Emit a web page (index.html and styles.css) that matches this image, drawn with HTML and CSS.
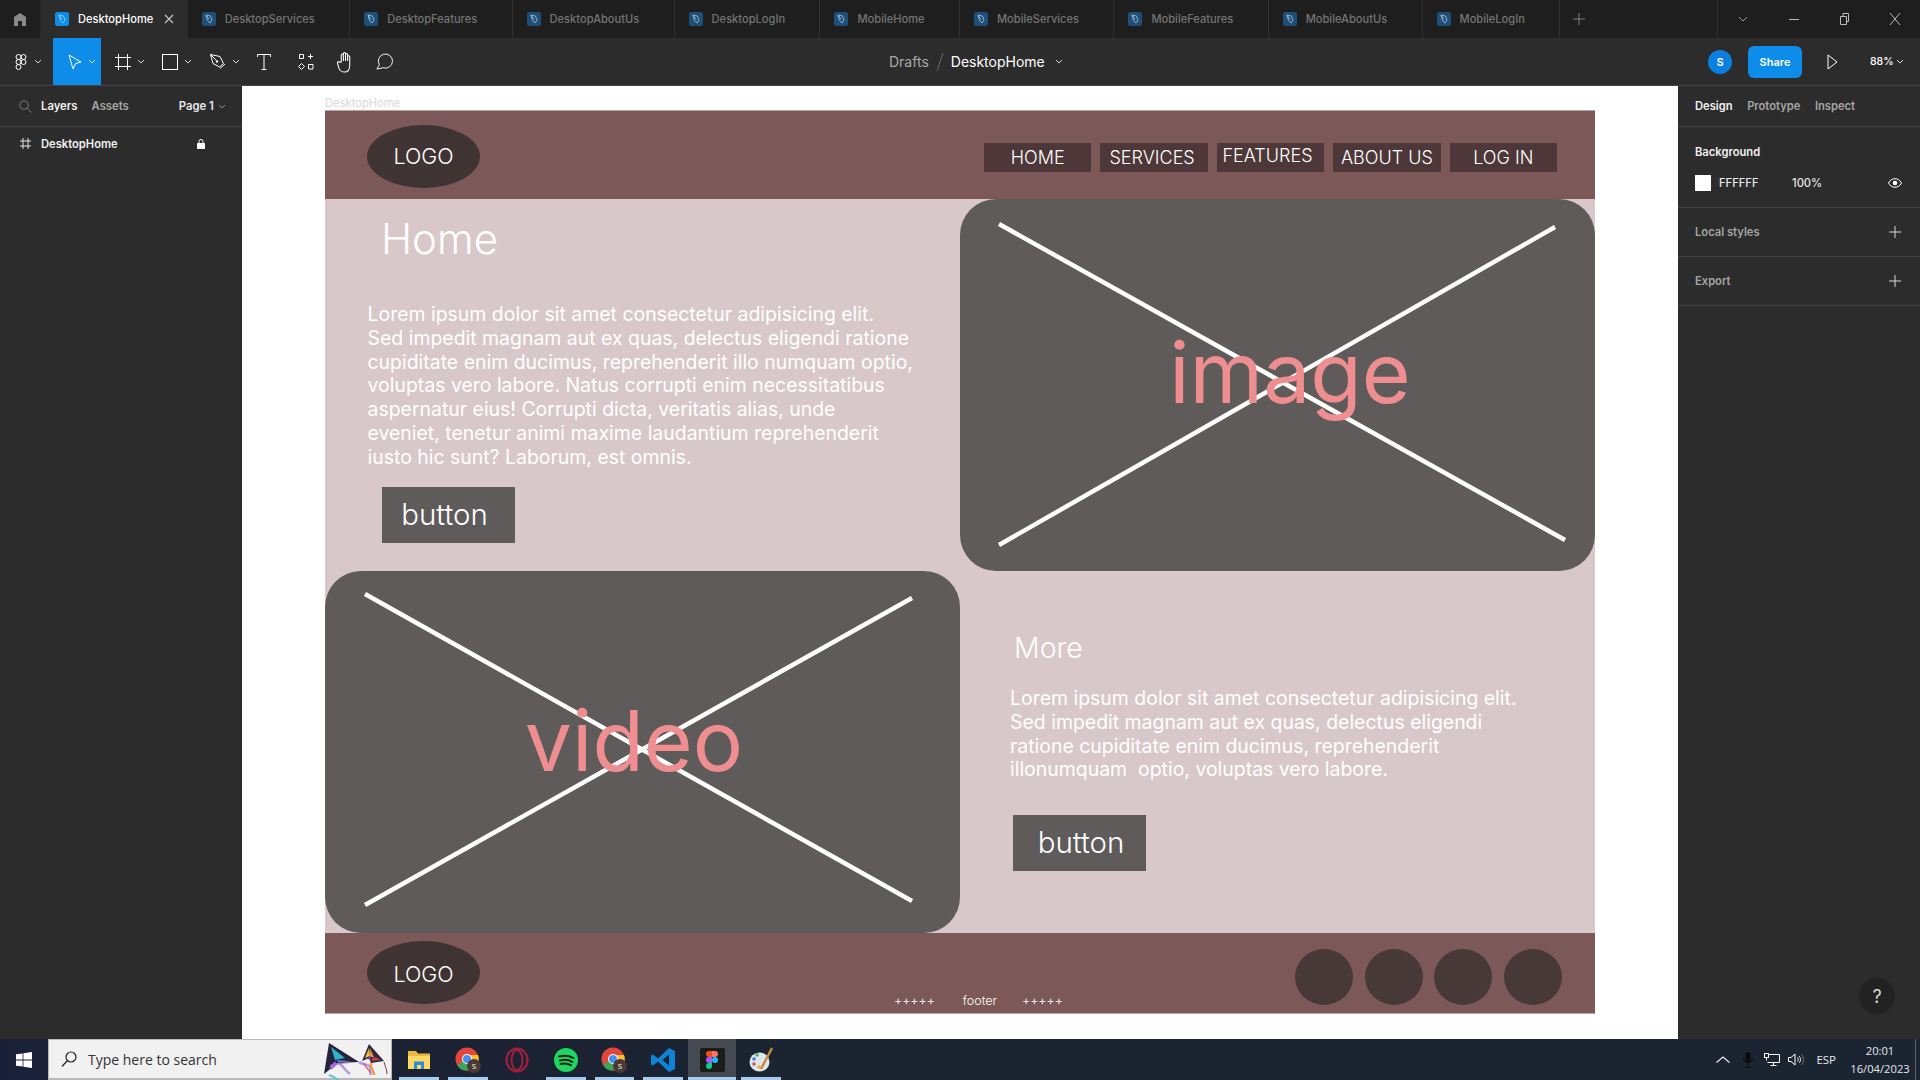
FILE: index.html
```html
<!DOCTYPE html>
<html lang="en">
<head>
<meta charset="utf-8">
<title>DesktopHome - Figma</title>
<link rel="stylesheet" href="styles.css">
</head>
<body>
<svg class="defs" width="0" height="0" aria-hidden="true">
  <symbol id="fileicon" viewBox="0 0 14 14">
    <rect width="14" height="14" rx="2" fill="currentColor"/>
    <path d="M4 3l4.500 1 1.500 4-2 3-2.500-2.500zM4.500 3.500L7 7.500" fill="none" stroke="#cfe6f8" stroke-width=".8" opacity=".8"/>
  </symbol>
  <symbol id="chev" viewBox="0 0 8 5">
    <path d="M1 1l3 3 3-3" fill="none" stroke="currentColor" stroke-width="1"/>
  </symbol>
  <symbol id="plus" viewBox="0 0 12 12">
    <path d="M6 0v12M0 6h12" fill="none" stroke="currentColor" stroke-width="1"/>
  </symbol>
</svg>
<div class="app">
  <div class="tabs">
    <div class="tab-home">
      <svg class="ico-home" viewBox="0 0 14 13"><path d="M7 0l6 4v9H9V8H5v5H1V4z" fill="#8a8a8a"/></svg>
    </div>
    <div class="tab active"><svg class="fileicon"><use href="#fileicon"/></svg><span>DesktopHome</span>
      <svg class="tab-close" viewBox="0 0 10 10"><path d="M1 1l8 8M9 1l-8 8" stroke="#c8c8c8" stroke-width="1.200"/></svg>
    </div>
    <div class="tab"><svg class="fileicon"><use href="#fileicon"/></svg><span>DesktopServices</span></div>
    <div class="tab"><svg class="fileicon"><use href="#fileicon"/></svg><span>DesktopFeatures</span></div>
    <div class="tab"><svg class="fileicon"><use href="#fileicon"/></svg><span>DesktopAboutUs</span></div>
    <div class="tab"><svg class="fileicon"><use href="#fileicon"/></svg><span>DesktopLogIn</span></div>
    <div class="tab"><svg class="fileicon"><use href="#fileicon"/></svg><span>MobileHome</span></div>
    <div class="tab"><svg class="fileicon"><use href="#fileicon"/></svg><span>MobileServices</span></div>
    <div class="tab"><svg class="fileicon"><use href="#fileicon"/></svg><span>MobileFeatures</span></div>
    <div class="tab"><svg class="fileicon"><use href="#fileicon"/></svg><span>MobileAboutUs</span></div>
    <div class="tab"><svg class="fileicon"><use href="#fileicon"/></svg><span>MobileLogIn</span></div>
    <div class="tab-add"><svg class="ico-plus"><use href="#plus"/></svg></div>
    <div class="win-controls">
      <svg class="win-ico" viewBox="0 0 12 12"><path d="M2 4l4 4 4-4" fill="none" stroke="#9a9a9a"/></svg>
      <svg class="win-ico" viewBox="0 0 12 12"><path d="M1 6.500h10" stroke="#bdbdbd"/></svg>
      <svg class="win-ico" viewBox="0 0 12 12"><path d="M2.500 3.500h6v8h-6zM5 3.500v-3h5.500v8H8.500" fill="none" stroke="#bdbdbd"/></svg>
      <svg class="win-ico" viewBox="0 0 12 12"><path d="M1 0l10 12M11 0L1 12" stroke="#bdbdbd"/></svg>
    </div>
  </div>

  <div class="toolbar">
    <div class="tools">
      <div class="tool tool-menu">
        <svg class="ico-logo" viewBox="0 0 12 16"><g fill="none" stroke="#fff"><circle cx="3.500" cy="3" r="2.500"/><circle cx="8.500" cy="3" r="2.500"/><circle cx="3.500" cy="8" r="2.500"/><circle cx="8.500" cy="8" r="2.500"/><circle cx="3.500" cy="13" r="2.500"/></g></svg>
        <svg class="chev"><use href="#chev"/></svg>
      </div>
      <div class="tool tool-move">
        <svg class="ico-tool" viewBox="0 0 16 16"><path d="M2 1l12 7-5.500 1.500L6 15z" fill="none" stroke="#fff"/></svg>
        <svg class="chev"><use href="#chev"/></svg>
      </div>
      <div class="tool tool-frame">
        <svg class="ico-tool" viewBox="0 0 16 16"><path d="M3.500 0v16M12.500 0v16M0 3.500h16M0 12.500h16" fill="none" stroke="#fff"/></svg>
        <svg class="chev"><use href="#chev"/></svg>
      </div>
      <div class="tool tool-rect">
        <svg class="ico-tool" viewBox="0 0 16 16"><rect x=".5" y=".5" width="15" height="15" fill="none" stroke="#fff"/></svg>
        <svg class="chev"><use href="#chev"/></svg>
      </div>
      <div class="tool tool-pen">
        <svg class="ico-tool" viewBox="0 0 16 16"><path d="M.5.500l9.500 2 3.500 7-4 3.500-6.500-3.500zM.5.500l6 6M10 14.500l5-4.500" fill="none" stroke="#fff"/><circle cx="7" cy="7.500" r="1.200" fill="#fff"/></svg>
        <svg class="chev"><use href="#chev"/></svg>
      </div>
      <div class="tool tool-text">
        <svg class="ico-tool" viewBox="0 0 14 16"><path d="M.5 3V.5h13V3M7 .5v15M4.500 15.500h5" fill="none" stroke="#fff"/></svg>
      </div>
      <div class="tool tool-comp">
        <svg class="ico-tool" viewBox="0 0 16 16"><path d="M1.500.5h4v4h-4zM10 2.500h5M12.500 0v5M3.500 9.500l3 3-3 3-3-3zM10.500 10.500h4.500v4.500h-4.500z" fill="none" stroke="#fff"/></svg>
      </div>
      <div class="tool tool-hand">
        <svg class="ico-big ico-hand" viewBox="0 0 18 20"><path d="M5 10V3.500a1 1 0 012 0V9 2a1 1 0 012 0v7-6a1 1 0 012 0v6-4a1 1 0 012 0v8c0 4-1.500 6.500-5 6.500-3 0-4-1-5-3L1.500 11.500c-.8-1.300.8-2.400 1.800-1.400z" fill="none" stroke="#fff"/></svg>
      </div>
      <div class="tool tool-comment">
        <svg class="ico-big" viewBox="0 0 18 18"><path d="M3.500 11.800A7.500 7.500 0 117.500 15.100L1 16.500z" fill="none" stroke="#fff"/></svg>
      </div>
    </div>
    <div class="crumbs">
      <span class="crumb-parent">Drafts</span>
      <svg class="crumb-sep" viewBox="0 0 8 18"><path d="M7 0L1 18" stroke="#6a6a6a"/></svg>
      <span class="crumb-file">DesktopHome</span>
      <svg class="chev"><use href="#chev"/></svg>
    </div>
    <div class="actions">
      <div class="avatar">S</div>
      <div class="share">Share</div>
      <svg class="ico-play" viewBox="0 0 11 16"><path d="M1 1l9 7-9 7z" fill="none" stroke="#fff"/></svg>
      <span class="zoom-val">88%</span>
      <svg class="chev"><use href="#chev"/></svg>
    </div>
  </div>

  <div class="main">
    <aside class="left">
      <div class="left-tabs">
        <svg class="ico-search" viewBox="0 0 13 13"><circle cx="5" cy="5" r="4.300" fill="none" stroke="#7d7d7d"/><path d="M8 8l4.500 4.500" stroke="#7d7d7d"/></svg>
        <span class="lt-on">Layers</span>
        <span class="lt-off">Assets</span>
        <span class="lt-page">Page 1</span>
        <svg class="chev chev-dim"><use href="#chev"/></svg>
      </div>
      <div class="layer">
        <svg class="ico-hash" viewBox="0 0 11 11"><path d="M3 0v11M8 0v11M0 3h11M0 8h11" fill="none" stroke="#e8e8e8"/></svg>
        <span class="layer-name">DesktopHome</span>
        <svg class="ico-lock" viewBox="0 0 8 10"><rect y="4" width="8" height="6" rx=".5" fill="#fff"/><path d="M2 4.500V2.500a2 2 0 014 0v2" fill="none" stroke="#fff"/></svg>
      </div>
    </aside>

    <div class="canvas">
      <div class="frame-label">DesktopHome</div>
      <div class="frame">
        <header class="site-head">
          <div class="logo logo-head">LOGO</div>
          <nav class="nav">
            <a class="nav-item">HOME</a>
            <a class="nav-item nav-left">SERVICES</a>
            <a class="nav-item nav-raised">FEATURES</a>
            <a class="nav-item">ABOUT US</a>
            <a class="nav-item">LOG IN</a>
          </nav>
        </header>
        <section class="intro">
          <h1 class="intro-title">Home</h1>
          <p class="body-text">Lorem ipsum dolor sit amet consectetur adipisicing elit.<br>Sed impedit magnam aut ex quas, delectus eligendi ratione<br>cupiditate enim ducimus, reprehenderit illo numquam optio,<br>voluptas vero labore. Natus corrupti enim necessitatibus<br>aspernatur eius! Corrupti dicta, veritatis alias, unde<br>eveniet, tenetur animi maxime laudantium reprehenderit<br>iusto hic sunt? Laborum, est omnis.</p>
          <div class="btn btn-intro">button</div>
        </section>
        <figure class="media media-image">
          <span class="media-word">image</span>
          <svg class="media-x" viewBox="0 0 635 372"><path d="M39 25l566 316M595 28L39 346" stroke="#fff" stroke-width="4.500" fill="none"/></svg>
        </figure>
        <figure class="media media-video">
          <span class="media-word">video</span>
          <svg class="media-x" viewBox="0 0 635 362"><path d="M40 23l547 307M587 27L40 334" stroke="#fff" stroke-width="4.500" fill="none"/></svg>
        </figure>
        <section class="more">
          <h2 class="more-title">More</h2>
          <p class="body-text">Lorem ipsum dolor sit amet consectetur adipisicing elit.<br>Sed impedit magnam aut ex quas, delectus eligendi<br>ratione cupiditate enim ducimus, reprehenderit<br>illonumquam&nbsp; optio, voluptas vero labore.</p>
          <div class="btn btn-more">button</div>
        </section>
        <footer class="site-foot">
          <div class="logo logo-foot">LOGO</div>
          <div class="foot-text"><span>+++++</span><span>footer</span><span>+++++</span></div>
          <div class="socials"><i class="social"></i><i class="social"></i><i class="social"></i><i class="social"></i></div>
        </footer>
      </div>
    </div>

    <aside class="right">
      <div class="right-tabs"><span class="lt-on">Design</span><span class="lt-off">Prototype</span><span class="lt-off">Inspect</span></div>
      <div class="panel-bg">
        <div class="panel-title">Background</div>
        <div class="bg-row">
          <i class="swatch"></i><span class="bg-hex">FFFFFF</span><span class="bg-pct">100%</span>
          <svg class="ico-eye" viewBox="0 0 14 10"><path d="M.5 5C2 2 4.500.7 7 .7S12 2 13.500 5C12 8 9.500 9.300 7 9.300S2 8 .5 5z" fill="none" stroke="#fff"/><circle cx="7" cy="5" r="2.300" fill="#fff"/></svg>
        </div>
      </div>
      <div class="panel-row"><span class="lt-off">Local styles</span><svg class="ico-plus"><use href="#plus"/></svg></div>
      <div class="panel-row"><span class="lt-off">Export</span><svg class="ico-plus"><use href="#plus"/></svg></div>
      <div class="help">?</div>
    </aside>
  </div>

  <div class="taskbar">
    <div class="start">
      <svg class="ico-win" viewBox="0 0 16 16"><path d="M0 2.300l6.600-.9v6.200H0zM7.400 1.300L16 0v7.600H7.400zM0 8.400h6.600v6.200L0 13.700zM7.400 8.400H16V16l-8.600-1.300z" fill="#fff"/></svg>
    </div>
    <div class="searchbox">
      <svg class="ico-tsearch" viewBox="0 0 16 16"><circle cx="10" cy="6" r="5" fill="none" stroke="#222" stroke-width="1.200"/><path d="M6.500 9.500L1 15.500" stroke="#222" stroke-width="1.200"/></svg>
      <span class="search-text">Type here to search</span>
      <svg class="ico-kites" viewBox="0 0 65 41">
        <path d="M14 24c5 2 7 8 12 11M35 23c4 4 9 1 11 5 1 3-1 5 1 8" fill="none" stroke="#b79be0" stroke-width="2.500"/>
        <path d="M5 36c3 1 6 2 9 5" fill="none" stroke="#52c4d8" stroke-width="2"/>
        <path d="M5 4l30 19-21 1L0 35z" fill="#23233a"/>
        <path d="M7 8l14 11-10 2z" fill="#2fb3c9"/>
        <path d="M13 21l15 1.500-14 1z" fill="#6f7fd8"/>
        <path d="M4 30l7-8 1 2z" fill="#9d5fd6"/>
        <path d="M6 26l6-2 14 0-12 1-7 6z" fill="#a868e0"/>
        <path d="M47 24c-1 4 3 8 3 12" fill="none" stroke="#ee9a4a" stroke-width="2.500"/>
        <path d="M40 24c1 4 4 6 7 10" fill="none" stroke="#d8515a" stroke-width="1.200"/>
        <path d="M60 23c1 4 3 8 3 12" fill="none" stroke="#8c3a3a" stroke-width="1"/>
        <path d="M45 5l-7 17 7-3 2 5 13-2z" fill="#2a2a3c"/>
        <path d="M45 9l-4 10 5-2z" fill="#f2c23e"/>
        <path d="M46 9l4 9-4 0z" fill="#e98a3c"/>
        <path d="M48 19l3-1 6 3-9 1z" fill="#c8404a"/>
        <path d="M42 20l4-2 1 3z" fill="#8a4fc4"/>
      </svg>
    </div>
    <div class="apps">
      <div class="app-cell app-on">
        <svg class="app-ico-folder" viewBox="0 0 22 18"><path d="M0 0h8l2 2.500h12V18H0z" fill="#e9b93c"/><path d="M0 5h22v13H0z" fill="#ffd968"/><path d="M6 10.500h10V18h-3v-4H9v4H6z" fill="#2b8fd8"/></svg>
      </div>
      <div class="app-cell app-on">
        <svg class="app-ico app-ico-lg" viewBox="0 0 26 26"><circle cx="12" cy="12" r="11.500" fill="#e2463a"/><path d="M12 12L2 18a11.500 11.500 0 0011 5.500z" fill="#3aa757"/><path d="M12 12l1 11.500A11.500 11.500 0 0023 8H12z" fill="#fbc02d"/><circle cx="12" cy="12" r="5" fill="#fff"/><circle cx="12" cy="12" r="4" fill="#4a8ef0"/><circle cx="19" cy="19" r="7" fill="#4b3a34"/><text class="app-badge" x="19" y="22">S</text></svg>
      </div>
      <div class="app-cell">
        <svg class="app-ico" viewBox="0 0 24 26"><ellipse cx="12" cy="13" rx="10.500" ry="11.500" fill="none" stroke="#a3203c" stroke-width="2.200"/><ellipse cx="12" cy="13" rx="5.500" ry="10" fill="none" stroke="#a3203c" stroke-width="2"/></svg>
      </div>
      <div class="app-cell app-on">
        <svg class="app-ico" viewBox="0 0 24 24"><circle cx="12" cy="12" r="12" fill="#1ed760"/><path d="M5 8.500c5-1.500 10-1 14.500 1.500M6 12.500c4-1 9-.7 12.500 1.500M6.500 16c3.500-.8 7.500-.5 10.500 1.200" fill="none" stroke="#14231a" stroke-width="2" stroke-linecap="round"/></svg>
      </div>
      <div class="app-cell app-on">
        <svg class="app-ico app-ico-lg" viewBox="0 0 26 26"><circle cx="12" cy="12" r="11.500" fill="#e2463a"/><path d="M12 12L2 18a11.500 11.500 0 0011 5.500z" fill="#3aa757"/><path d="M12 12l1 11.500A11.500 11.500 0 0023 8H12z" fill="#fbc02d"/><circle cx="12" cy="12" r="5" fill="#fff"/><circle cx="12" cy="12" r="4" fill="#4a8ef0"/><circle cx="19" cy="19" r="7" fill="#4b3a34"/><text class="app-badge" x="19" y="22">S</text></svg>
      </div>
      <div class="app-cell app-on">
        <svg class="app-ico app-ico-lg" viewBox="0 0 26 26"><path d="M19 1l6 3v18l-6 3L8 14.500 3 18.500 1 17.500v-9l2-1 5 4zM19 7.500L12.500 13l6.500 5.500z" fill="#0f83d6"/></svg>
      </div>
      <div class="app-cell app-on app-active">
        <span class="figma-tile"><svg class="figma-logo" viewBox="0 0 12 18"><path d="M3 0h3v6H3a3 3 0 010-6z" fill="#f24e1e"/><path d="M6 0h3a3 3 0 010 6H6z" fill="#ff7262"/><path d="M3 6h3v6H3a3 3 0 010-6z" fill="#a259ff"/><circle cx="9" cy="9" r="3" fill="#1abcfe"/><path d="M3 12h3v3a3 3 0 11-3-3z" fill="#0acf83"/></svg></span>
      </div>
      <div class="app-cell app-on">
        <svg class="app-ico" viewBox="0 0 24 26"><ellipse cx="10.500" cy="15" rx="10" ry="9.500" fill="#dfe6ec"/><circle cx="5" cy="12" r="1.800" fill="#3b82d6"/><circle cx="8" cy="8" r="1.800" fill="#41b36a"/><circle cx="5" cy="17" r="1.800" fill="#d9534f"/><circle cx="10" cy="20" r="1.800" fill="#e6b33d"/><path d="M23 1L12 22" stroke="#c98a3c" stroke-width="2.500"/></svg>
      </div>
    </div>
    <div class="tray">
      <svg class="tray-chev" viewBox="0 0 14 7"><path d="M.5 6.500L7 1l6.500 5.500" fill="none" stroke="#e8e8e8" stroke-width="1.200"/></svg>
      <svg class="tray-mic" viewBox="0 0 10 16"><rect x="2.500" y="0" width="5" height="10" rx="2.500" fill="#0b0b0b"/><path d="M.5 6c0 6 9 6 9 0M5 11v4M2 15.500h6" fill="none" stroke="#0b0b0b"/></svg>
      <svg class="tray-net" viewBox="0 0 16 13"><path d="M3.500 1.500h12v8h-12M9.500 9.500v3M6.500 12.500h6" fill="none" stroke="#fff"/><rect x=".5" y=".5" width="4" height="4" fill="#1b2431" stroke="#fff"/><path d="M2.500 4.500v3" stroke="#fff"/></svg>
      <svg class="tray-vol" viewBox="0 0 16 13"><path d="M.5 4.500h2.500L7 1v11L3 8.500H.5zM9.500 4.500c1 1 1 3 0 4M11 3c2 2 2 5 0 7" fill="none" stroke="#fff"/><path d="M13.500 1c2.500 3 2.500 8 0 11" fill="none" stroke="#6d737b"/></svg>
      <span class="tray-lang">ESP</span>
      <div class="clock"><span>20:01</span><span>16/04/2023</span></div>
      <i class="show-desktop"></i>
    </div>
  </div>
</div>
</body>
</html>
```

FILE: styles.css
```css
* { box-sizing: border-box; }
html, body { margin: 0; height: 100%; }
body { font-family: "Inter", "Liberation Sans", sans-serif; background: #2c2c2c; overflow: hidden; }
.defs { position: absolute; }
svg { display: block; flex: none; }
h1, h2, p, figure { margin: 0; font-weight: 400; }

.app { width: 1920px; height: 1080px; display: flex; flex-direction: column; }

/* Tabs */
.tabs { height: 38px; flex: none; display: flex; background: #1e1e1e; }
.tab-home { width: 41px; display: flex; align-items: center; justify-content: center; border-right: 1px solid #2a2a2a; }
.ico-home { width: 14px; height: 13px; }
.tab { position: relative; display: flex; align-items: center; gap: 9px; padding: 0 34.400px 0 14px; border-right: 1px solid #303030; font-size: 11.100px; font-weight: 500; color: #757575; white-space: nowrap; }
.tab.active { background: #2c2c2c; color: #fff; border-right: 0; }
.fileicon { width: 14px; height: 14px; color: #1d4f78; }
.active .fileicon { color: #0d8ce9; }
.tab-close { position: absolute; right: 14px; top: 14px; width: 10px; height: 10px; }
.tab-add { width: 158px; padding-left: 13px; display: flex; align-items: center; border-right: 1px solid #303030; color: #7f7f7f; }
.ico-plus { width: 12px; height: 12px; }
.win-controls { flex: 1; display: flex; align-items: center; justify-content: space-between; padding: 0 19px; }
.win-ico { width: 12px; height: 12px; }

/* Toolbar */
.toolbar { height: 48px; flex: none; display: flex; align-items: center; background: #2c2c2c; border-bottom: 1px solid #444; }
.tools { width: 869px; height: 47px; display: flex; }
.tool { height: 47px; display: flex; align-items: center; gap: 6px; color: #fff; }
.tool .chev { width: 8px; height: 5px; }
.chev { width: 8px; height: 5px; color: #d8d8d8; }
.chev-dim { color: #8a8a8a; }
.tool-menu { width: 53px; padding-left: 15px; gap: 7px; }
.ico-logo { width: 12px; height: 16px; }
.tool-move { width: 48px; padding-left: 14px; background: #0d8ce9; gap: 5px; }
.ico-tool { width: 16px; height: 16px; }
.ico-big { width: 17px; height: 20px; }
.ico-hand { width: 19px; height: 22px; }
.tool-frame { width: 47px; padding-left: 14px; }
.tool-rect { width: 49px; padding-left: 14px; }
.tool-pen { width: 47px; padding-left: 13px; }
.tool-text { width: 40px; padding-left: 12px; }
.tool-comp { width: 38px; padding-left: 14px; }
.tool-hand { width: 40px; padding-left: 14px; }
.tool-comment { width: 40px; padding-left: 14px; }
.crumbs { display: flex; align-items: center; font-size: 14px; margin-left: 20px; width: 200px; }
.crumb-parent { color: #a8a8a8; }
.crumb-sep { width: 8px; height: 18px; margin: 0 7px; }
.crumb-file { color: #fff; margin-right: 10px; }
.actions { flex: 1; display: flex; align-items: center; justify-content: flex-end; padding-right: 16px; color: #fff; }
.avatar { width: 24px; height: 24px; border-radius: 50%; background: #0b7fe0; display: flex; align-items: center; justify-content: center; font-size: 11px; font-weight: 600; margin-right: 16px; }
.share { width: 54px; height: 32px; border-radius: 6px; background: #0d8ce9; display: flex; align-items: center; justify-content: center; font-size: 11px; font-weight: 600; margin-right: 25px; }
.ico-play { width: 11px; height: 16px; margin-right: 32px; }
.zoom-val { width: 22px; font-size: 10.500px; font-weight: 500; margin-right: 4px; white-space: nowrap; }

/* Main */
.main { flex: 1; display: flex; min-height: 0; }
.left { width: 242px; flex: none; background: #2c2c2c; }
.left-tabs { height: 41px; display: flex; align-items: center; padding-left: 19px; border-bottom: 1px solid #444; font-size: 11.300px; font-weight: 600; }
.ico-search { width: 13px; height: 13px; margin-right: 9px; }
.lt-on { color: #f2f2f2; }
.lt-off { color: #a6a6a6; }
.left-tabs .lt-off { margin-left: 14px; }
.lt-page { color: #e8e8e8; margin-left: 50px; margin-right: 4px; }
.layer { height: 33px; display: flex; align-items: center; padding-left: 20px; font-size: 11.200px; font-weight: 600; color: #f2f2f2; }
.ico-hash { width: 11px; height: 11px; margin-right: 10px; }
.layer-name { width: 156px; }
.ico-lock { width: 8px; height: 10px; }

/* Canvas */
.canvas { flex: 1; background: #fff; padding: 10px 0 0 83px; min-width: 0; }
.frame-label { height: 14px; font-size: 11.200px; line-height: 14px; color: #d9d9d9; }
.frame { width: 1270px; height: 904px; display: grid; grid-template-columns: 635px 635px; grid-template-rows: 89px 372px 362px 81px; background: #d9c8c9; }

.site-head { grid-column: 1 / 3; background: #7c5858; display: flex; align-items: center; justify-content: space-between; padding: 0 38px 0 42px; border-top: 1px solid #b9a0a0; }
.logo { width: 113px; height: 63px; border-radius: 50%; background: #3f3333; color: #fff; display: flex; align-items: center; justify-content: center; font-size: 21.500px; font-weight: 300; }
.logo-head { margin-top: 2px; }
.nav { display: flex; gap: 9px; margin-top: 4px; }
.nav-item { width: 107.400px; height: 29px; background: #4e3738; color: #fff; font-size: 18px; font-weight: 300; display: flex; align-items: center; justify-content: center; padding-top: 1px; }
.nav-left { padding-right: 4px; }
.nav-raised { padding: 0 6px 4px 0; }

.intro { padding: 0 0 0 42.500px; }
.intro-title { font-size: 42px; line-height: 50px; font-weight: 300; color: #fff; margin: 15px 0 0 13.500px; }
.body-text { font-size: 19.450px; line-height: 23.800px; color: #fff; white-space: nowrap; }
.intro .body-text { margin-top: 39px; }
.btn { width: 133px; height: 56px; background: #5f5b5b; color: #fff; font-size: 29.500px; font-weight: 300; display: flex; align-items: center; justify-content: center; }
.btn-intro { margin: 17px 0 0 14.500px; padding: 0 8px 2px 0; }

.media { position: relative; background: #5f5b5b; border-radius: 36px; display: flex; align-items: center; justify-content: center; overflow: hidden; }
.media-word { position: relative; z-index: 1; font-size: 84px; line-height: 1; font-weight: 400; color: #ee8e90; }
.media-x { position: absolute; left: 0; top: 0; width: 100%; height: 100%; }
.media-image { grid-column: 2; grid-row: 2; }
.media-image .media-word { margin: 0 0 25px 25px; }
.media-video { grid-column: 1; grid-row: 3; }
.media-video .media-word { margin: 0 0 23px -17px; }

.more { padding: 57px 0 0 50px; }
.more-title { font-size: 28.500px; line-height: 40px; color: #fff; margin-left: 4px; font-weight: 300; }
.more .body-text { margin-top: 19px; }
.btn-more { margin: 33px 0 0 3px; padding: 0 0 2px 3px; }

.site-foot { grid-column: 1 / 3; background: #7c5858; position: relative; display: flex; align-items: center; justify-content: space-between; padding: 0 33px 0 42px; border-bottom: 1px solid #b9a0a0; }
.logo-foot { margin-top: -1px; padding-top: 2px; }
.foot-text { position: absolute; left: 569px; bottom: 5px; display: flex; gap: 28px; font-size: 12.500px; font-weight: 300; color: #fff; }
.foot-text span:last-child { margin-left: -3px; }
.socials { display: flex; gap: 11.670px; margin-top: 8px; }
.social { width: 58px; height: 56px; border-radius: 50%; background: #483939; }

/* Right panel */
.right { width: 242px; flex: none; position: relative; background: #2c2c2c; font-size: 11.200px; font-weight: 600; }
.right-tabs { height: 41px; display: flex; align-items: center; gap: 14.500px; padding-left: 17px; border-bottom: 1px solid #444; }
.panel-bg { height: 81px; padding: 17px 17px 0; border-bottom: 1px solid #444; }
.panel-title { color: #f2f2f2; line-height: 16px; }
.bg-row { display: flex; align-items: center; margin-top: 15px; color: #e8e8e8; font-weight: 500; }
.swatch { width: 16px; height: 16px; background: #fff; }
.bg-hex { width: 73px; margin-left: 8px; }
.bg-pct { width: 96px; }
.ico-eye { width: 14px; height: 10px; }
.panel-row { height: 49px; display: flex; align-items: center; justify-content: space-between; padding: 0 19px 0 17px; border-bottom: 1px solid #444; color: #d8d8d8; }
.help { position: absolute; right: 25px; bottom: 25px; width: 36px; height: 36px; border-radius: 50%; background: #222; color: #d8d8d8; display: flex; align-items: center; justify-content: center; font-size: 18px; font-weight: 400; }

/* Taskbar */
.taskbar { height: 41px; flex: none; display: flex; background: linear-gradient(90deg, #1a2038, #1b2431 40%, #1b2431); font-family: "Open Sans", "Liberation Sans", sans-serif; }
.start { width: 48px; display: flex; align-items: center; justify-content: center; }
.ico-win { width: 16px; height: 16px; }
.searchbox { width: 344px; display: flex; align-items: center; background: #f1f1f1; border: 1px solid #b8b8b8; border-bottom-width: 2px; padding-left: 12px; position: relative; }
.ico-tsearch { width: 16px; height: 16px; margin-right: 11px; }
.search-text { font-size: 14px; color: #333; }
.ico-kites { position: absolute; right: 2px; top: -1px; width: 65px; height: 41px; }
.apps { display: flex; padding-left: 7px; width: 398px; }
.app-cell { width: 40px; margin-right: 9px; position: relative; display: flex; align-items: center; justify-content: center; }
.app-on::after { content: ""; position: absolute; left: 0; right: 0; bottom: 0; height: 3px; background: #a6cdf0; }
.app-active { width: 48px; margin: 0 5px 0 -4px; background: #454a52; }
.app-ico { width: 24px; height: 26px; }
.app-ico-lg { width: 26px; height: 26px; }
.app-ico-folder { width: 22px; height: 18px; }
.app-badge { font-size: 8px; fill: #fff; text-anchor: middle; font-family: "Open Sans", sans-serif; }
.figma-tile { width: 25px; height: 24px; background: #1c1c1c; border-radius: 2px; display: flex; align-items: center; justify-content: center; }
.figma-logo { width: 12px; height: 18px; }
.tray { flex: 1; display: flex; align-items: center; justify-content: flex-end; color: #e8e8e8; }
.tray-chev { width: 14px; height: 7px; margin-right: 13px; }
.tray-mic { width: 10px; height: 16px; margin-right: 11px; }
.tray-net { width: 16px; height: 13px; margin-right: 8px; }
.tray-vol { width: 16px; height: 13px; margin-right: 12px; }
.tray-lang { font-size: 11.500px; margin-right: 15px; }
.clock { width: 58px; display: flex; flex-direction: column; align-items: center; white-space: nowrap; line-height: 18px; font-size: 11.200px; margin-right: 6px; }
.show-desktop { width: 1px; height: 41px; background: #5a626c; margin-right: 4px; }
```
